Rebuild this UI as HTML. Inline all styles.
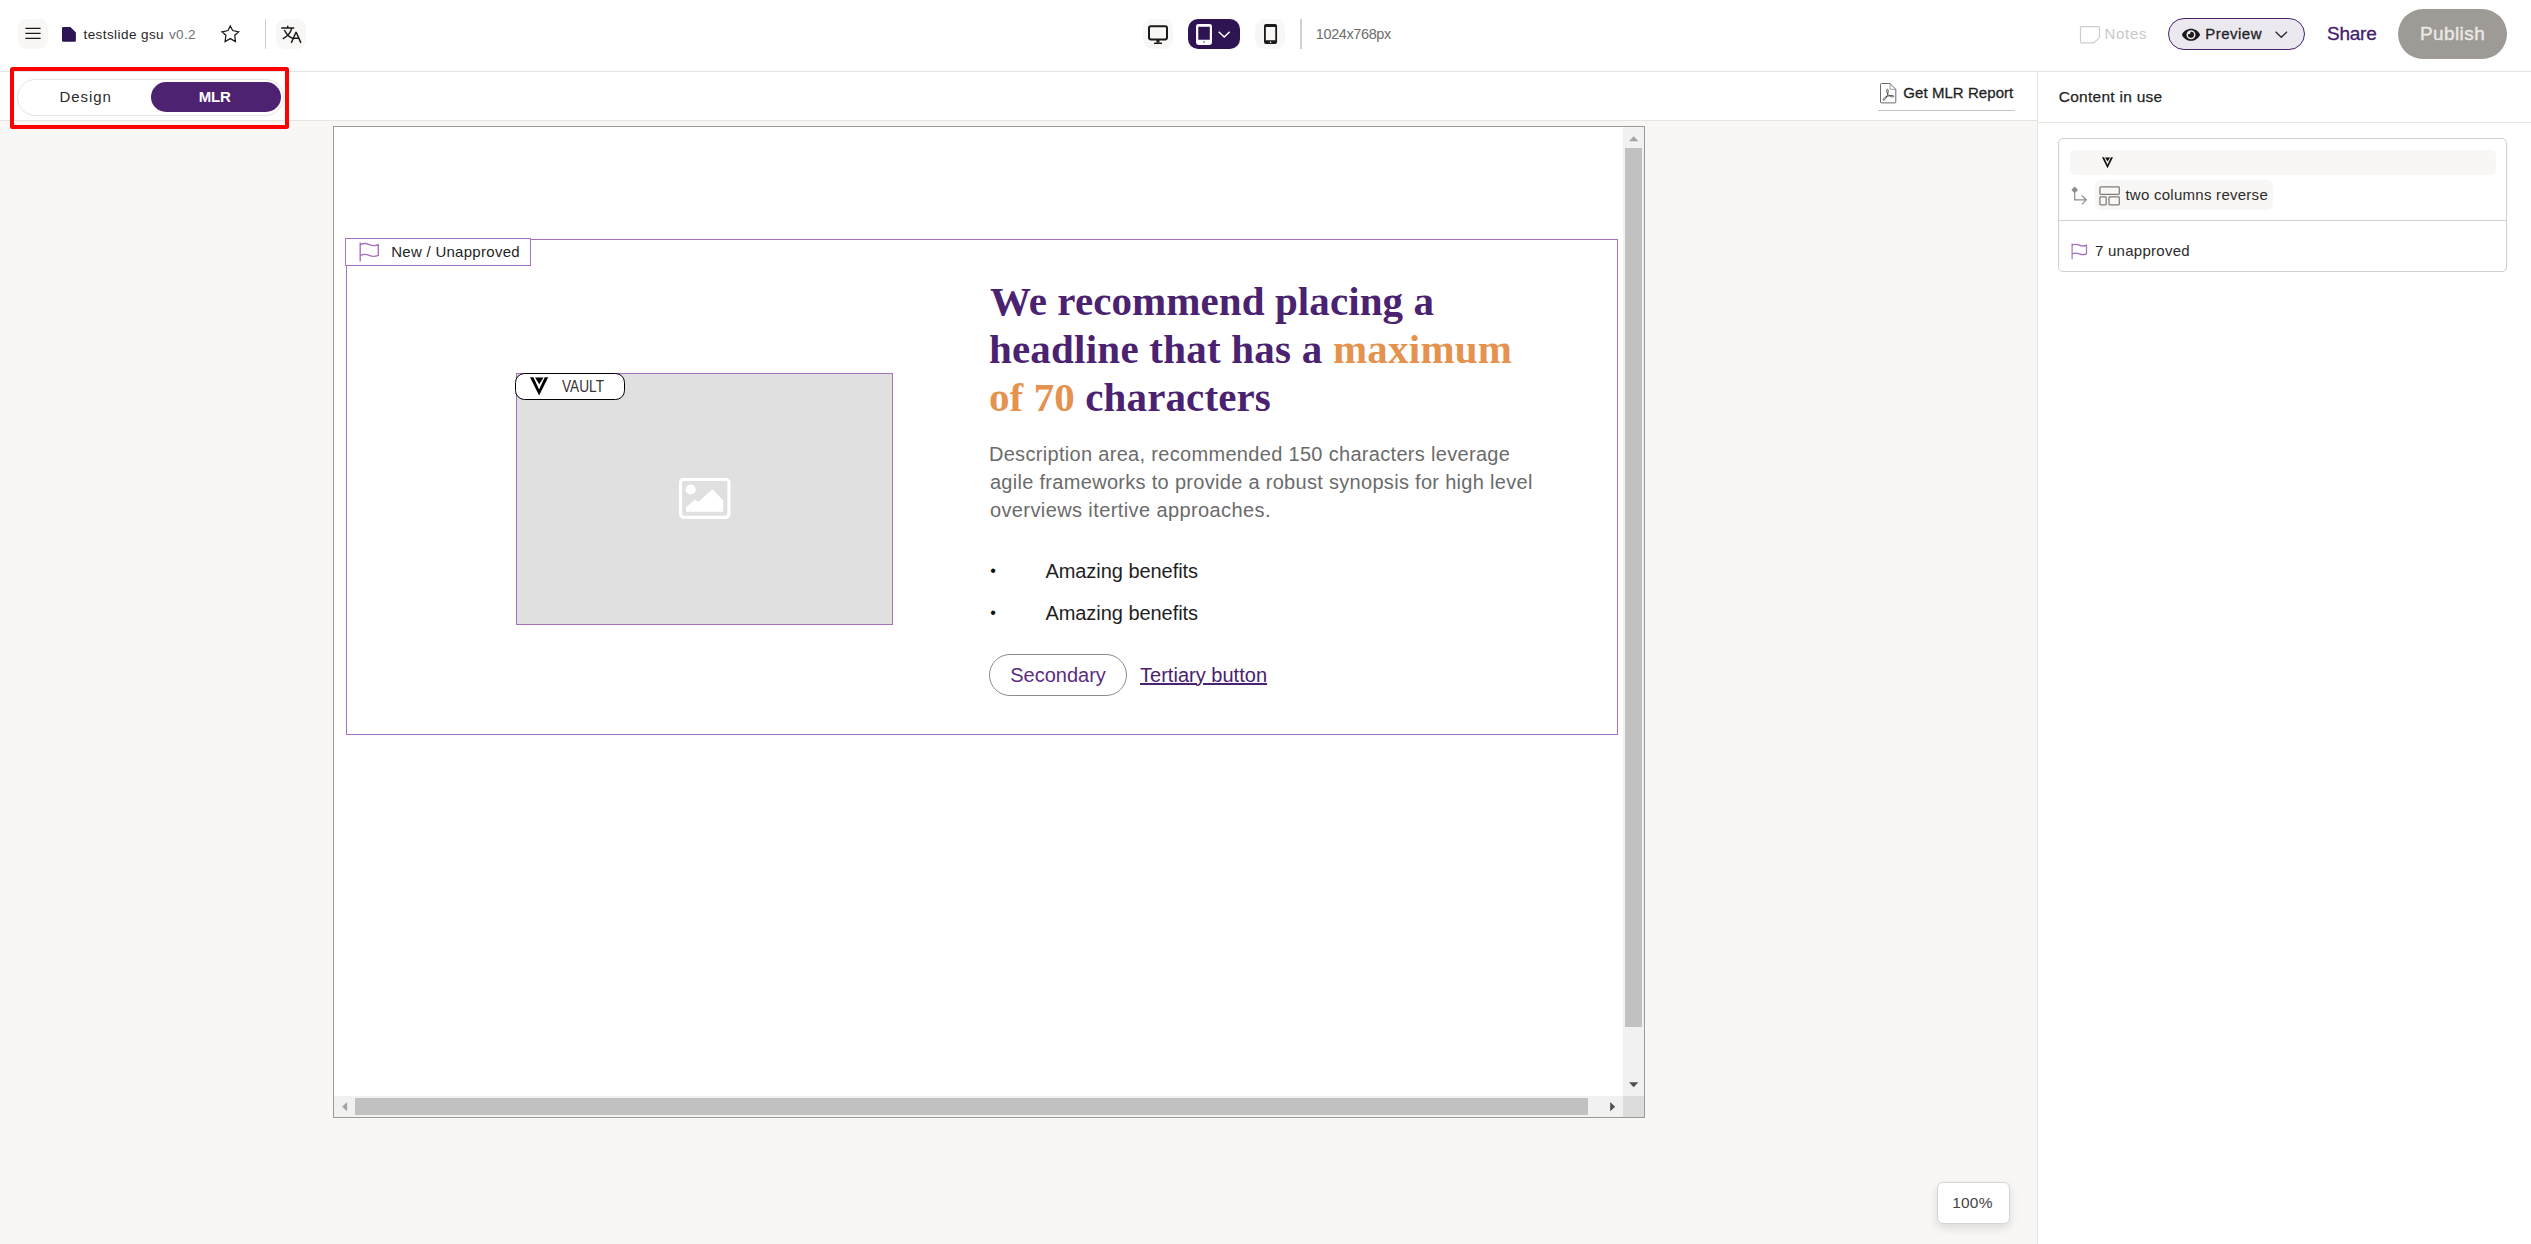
<!DOCTYPE html>
<html lang="en">
<head>
<meta charset="utf-8">
<title>testslide gsu v0.2</title>
<style>
*{box-sizing:border-box;margin:0;padding:0}
html,body{width:2531px;height:1244px;overflow:hidden;background:#f8f7f5;font-family:"Liberation Sans",sans-serif;color:#2b2b2b}
.abs,.t{position:absolute}
.t{white-space:nowrap;line-height:1;display:block}
#topbar{left:0;top:0;width:2531px;height:72px;background:#fff;border-bottom:1px solid #e6e4e1}
#subbar{left:0;top:72px;width:2038px;height:49px;background:#fff;border-bottom:1px solid #e6e4e1}
#rpanel{left:2037px;top:72px;width:494px;height:1172px;background:#fff;border-left:1px solid #e6e4e1}
#rhead{left:2038px;top:72px;width:493px;height:51px;border-bottom:1px solid #e6e4e1}
.hl{font-family:"Liberation Serif",serif;font-weight:bold}
.ibtn{background:#f8f7f5;border-radius:9px;width:30px;height:30px;top:19px}
svg{position:absolute;overflow:visible}
</style>
</head>
<body>
<!-- ===== TOP BAR ===== -->
<div id="topbar" class="abs"></div>
<!-- hamburger -->
<div class="abs ibtn" style="left:18px"></div>
<svg style="left:25px;top:27px" width="16" height="14" viewBox="0 0 16 14"><path d="M0.4 1.4H15.6M0.4 6.4H15.6M0.4 11.45H15.6" stroke="#1a1a1a" stroke-width="1.2" fill="none"/></svg>
<!-- file icon -->
<svg style="left:62px;top:27px" width="14" height="15" viewBox="0 0 14 15"><path d="M1.2 0H8.4L13.900 5.600V13.600a1.200 1.200 0 0 1-1.200 1.200H1.200A1.200 1.200 0 0 1 0 13.600V1.200A1.200 1.200 0 0 1 1.200 0Z" fill="#2e1452"/></svg>
<span class="t" id="t_title" style="left:83.50px;top:28.00px;letter-spacing:0.422px;font-size:13.5px;color:#1f1f1f">testslide gsu</span>
<span class="t" id="t_ver" style="left:169.00px;top:28.00px;letter-spacing:0.330px;font-size:13.5px;color:#6f6f6f">v0.2</span>
<!-- star -->
<svg style="left:219px;top:23px" width="23" height="23" viewBox="0 0 23 23"><path d="M11.30 3.00 L13.62 7.50 L19.71 8.84 L15.76 12.34 L16.43 18.49 L11.30 15.59 L6.08 18.49 L6.93 12.34 L2.98 8.84 L9.07 7.50Z" fill="none" stroke="#1a1a1a" stroke-width="1.25" stroke-linejoin="miter"/></svg>
<div class="abs" style="left:265px;top:19px;width:1px;height:30px;background:#cfcfcf"></div>
<!-- translate -->
<div class="abs ibtn" style="left:276px"></div>
<svg style="left:276px;top:19px" width="30" height="30" viewBox="0 0 30 30"><g fill="none" stroke="#1a1a1a" stroke-width="1.45" stroke-linecap="butt"><path d="M5.2 8.9H18.2M11.7 6.7V8.6M15.7 9.4C14.6 14 11.2 17.500 6.800 19.900M8.400 11C10 14.500 13 17.800 16.200 19.200H23.300"/><path d="M15.300 23.900 20.100 13 24.900 23.900" stroke-linejoin="bevel"/></g></svg>

<!-- device buttons -->
<div class="abs ibtn" style="left:1143px"></div>
<svg style="left:1148px;top:25px" width="20" height="20" viewBox="0 0 20 20"><rect x="1" y="1.2" width="18" height="13.2" rx="1.8" fill="none" stroke="#1a1a1a" stroke-width="2"/><rect x="8.5" y="15" width="3" height="2.6" fill="#1a1a1a"/><rect x="6" y="17.4" width="8" height="1.7" rx=".5" fill="#1a1a1a"/></svg>
<div class="abs" style="left:1188px;top:19px;width:52px;height:30px;border-radius:10px;background:#2e1452"></div>
<svg style="left:1196px;top:24px" width="16" height="21" viewBox="0 0 16 21"><path fill="#fff" fill-rule="evenodd" d="M2.4 0h11.2A2.4 2.4 0 0 1 16 2.4v16.2a2.4 2.4 0 0 1-2.4 2.4H2.4A2.4 2.4 0 0 1 0 18.6V2.4A2.4 2.4 0 0 1 2.4 0ZM2.3 2.8V15.8H13.8V2.8ZM7 18.1a1 .5 0 1 0 2 0a1 .5 0 1 0-2 0Z"/></svg>
<svg style="left:1217.6px;top:31px" width="12.4" height="7.6" viewBox="0 0 13 8"><path d="M.7.8l5.8 5.6L12.3.8" fill="none" stroke="#fff" stroke-width="1.5"/></svg>
<div class="abs ibtn" style="left:1255px"></div>
<svg style="left:1263.8px;top:24px" width="13.1" height="20.1" viewBox="0 0 13 20"><path fill="#1a1a1a" fill-rule="evenodd" d="M2 0h9a2 2 0 0 1 2 2v16a2 2 0 0 1-2 2H2a2 2 0 0 1-2-2V2A2 2 0 0 1 2 0ZM1.8 3V16.2H11.2V3ZM5.7 18.2a.8.8 0 1 0 1.6 0a.8.8 0 1 0-1.6 0Z"/></svg>
<div class="abs" style="left:1300px;top:19px;width:2px;height:30px;background:#d0d0d0"></div>
<span class="t" id="t_size" style="left:1315.80px;top:27.00px;letter-spacing:-0.396px;font-size:14.5px;color:#6e6e6e">1024x768px</span>

<!-- notes -->
<svg style="left:2080px;top:25.5px" width="20" height="18" viewBox="0 0 20 18"><path d="M1.5.6H18.5a1 1 0 0 1 1 1V11.6L13.8 16.9H1.5a1 1 0 0 1-1-1V1.6a1 1 0 0 1 1-1Z" fill="none" stroke="#cdcdcd" stroke-width="1.2"/></svg>
<span class="t" id="t_notes" style="left:2104.60px;top:25.60px;letter-spacing:0.654px;font-size:15px;color:#c9c9c9">Notes</span>
<!-- preview -->
<div class="abs" style="left:2168px;top:18px;width:137px;height:32px;border-radius:16px;background:#ebe8f0;border:1.3px solid #4a2270"></div>
<svg style="left:2181.5px;top:27.5px" width="18" height="13.5" viewBox="0 0 576 432"><path fill="#1a1a1a" d="M572.52 201.4C518.29 95.5 410.93 24 288 24S57.68 95.6 3.48 201.4a32.35 32.35 0 0 0 0 29.19C57.71 336.5 165.07 408 288 408s230.32-71.6 284.52-177.4a32.35 32.35 0 0 0 0-29.2zM288 360a144 144 0 1 1 144-144 143.93 143.93 0 0 1-144 144zm0-240a95.31 95.31 0 0 0-25.31 3.79 47.85 47.85 0 0 1-66.9 66.9A95.78 95.78 0 1 0 288 120z"/></svg>
<span class="t" id="t_preview" style="left:2205.30px;top:25.60px;letter-spacing:0.480px;font-size:15px;color:#1f1f1f;-webkit-text-stroke:.3px #1f1f1f">Preview</span>
<svg style="left:2275px;top:31px" width="13" height="8" viewBox="0 0 13 8"><path d="M.6.7l5.7 5.6L12 .7" fill="none" stroke="#2b2b2b" stroke-width="1.3"/></svg>
<span class="t" id="t_share" style="left:2327.00px;top:24.20px;letter-spacing:-0.233px;font-size:19px;color:#43206b;-webkit-text-stroke:.3px #43206b">Share</span>
<div class="abs" style="left:2398px;top:9px;width:109px;height:50px;border-radius:25px;background:#9e9b96"></div>
<span class="t" id="t_publish" style="left:2419.90px;top:24.20px;letter-spacing:0.425px;font-size:19px;color:#ebe8e5;-webkit-text-stroke:.4px #ebe8e5">Publish</span>


<!-- ===== SUB BAR ===== -->
<div id="subbar" class="abs"></div>
<!-- red highlight box -->
<div class="abs" style="left:9.6px;top:67px;width:279.8px;height:61.6px;border:4.4px solid #ff0000;border-radius:2.5px"></div>
<!-- toggle -->
<div class="abs" style="left:17px;top:79px;width:266.5px;height:37px;border-radius:18.5px;border:1px solid #e3e3e3;background:#fff"></div>
<div class="abs" style="left:151px;top:82px;width:130px;height:30px;border-radius:15px;background:#4d2270"></div>
<span class="t" id="t_design" style="left:59.50px;top:88.70px;letter-spacing:0.930px;font-size:15px;color:#2b2b2b">Design</span>
<span class="t" id="t_mlr" style="left:198.70px;top:88.70px;letter-spacing:-0.129px;font-size:15px;color:#fff;font-weight:bold">MLR</span>
<!-- get mlr report -->
<svg style="left:1880px;top:82.8px" width="17" height="21" viewBox="0 0 17 21"><path d="M1.4.5H10.100L15.800 6.300V19a.9.9 0 0 1-.9.9H1.400a.9.9 0 0 1-.9-.9V1.400a.9.9 0 0 1 .9-.9Z" fill="#fff" stroke="#5a5a5a" stroke-width=".9"/><path d="M10.100.7V6.300H15.700" fill="none" stroke="#8a8a8a" stroke-width=".85"/><path d="M7.500 6.300c-.9 0-1.100 1.200-.7 2.600.5 2 1.800 3.600 3.400 4.400 1.300.6 3 .8 3.500.2.400-.6-.5-1.100-1.800-1.100-2.600 0-5.800 1-7.400 2.400-.9.800-1.600 1.900-1.200 2.300.5.400 1.500-.3 2.300-1.500 1.300-1.900 2.300-4.700 2.600-6.900.1-1.300-.1-2.400-.7-2.400Z" fill="none" stroke="#444" stroke-width=".9"/></svg>
<span class="t" id="t_getmlr" style="left:1903.30px;top:84.70px;letter-spacing:0.059px;font-size:15px;color:#1f1f1f;-webkit-text-stroke:.3px #1f1f1f">Get MLR Report</span>
<div class="abs" style="left:1878px;top:110px;width:137px;height:1px;background:#c4c4c4"></div>


<!-- ===== RIGHT PANEL ===== -->
<div id="rpanel" class="abs"></div>
<div id="rhead" class="abs"></div>
<span class="t" id="t_ciu" style="left:2058.70px;top:89.00px;letter-spacing:0.274px;font-size:15.5px;color:#1f1f1f;-webkit-text-stroke:.25px #1f1f1f">Content in use</span>
<div class="abs" style="left:2058px;top:138px;width:449px;height:134px;border:1px solid #d2d0cd;border-radius:5px;background:#fff"></div>
<div class="abs" style="left:2070px;top:150px;width:426px;height:25px;border-radius:5px;background:#f8f7f5"></div>
<!-- vault V small -->
<svg style="left:2101.5px;top:156.5px" width="11" height="11.5" viewBox="0 0 18.2 18.4"><path d="M0 .2H3.400L9.1 12.600 14.800.2H18.200L9.1 18.400Z" fill="#111"/><path d="M5 .6H13.500L9.200 7.200Z" fill="#111"/></svg>
<!-- arrow icon -->
<svg style="left:2070px;top:186px" width="18" height="19" viewBox="0 0 18 19"><path d="M4.700.600 8 3.900 4.700 7.200 1.400 3.900Z" fill="#8f8b85"/><path d="M4.700 6.500V13.800H16M11.800 9.300 16.300 13.800 11.800 18.300" fill="none" stroke="#8f8b85" stroke-width="1.2"/></svg>
<div class="abs" style="left:2095px;top:180px;width:178px;height:30px;border-radius:6px;background:#f8f7f5"></div>
<!-- layout icon -->
<svg style="left:2099px;top:185.500px" width="22" height="20" viewBox="0 0 22 20"><g fill="none" stroke="#7f7b75" stroke-width="1.25"><rect x=".9" y=".9" width="19.400" height="7.400" rx=".8"/><rect x=".9" y="10.900" width="6.300" height="8" rx=".8"/><rect x="10" y="10.900" width="10.300" height="8" rx=".8"/></g></svg>
<span class="t" id="t_twocol" style="left:2125.40px;top:186.70px;letter-spacing:0.266px;font-size:15px;color:#2b2b2b">two columns reverse</span>
<div class="abs" style="left:2059px;top:220px;width:447px;height:1px;background:#d2d0cd"></div>
<!-- flag -->
<svg style="left:2071px;top:243px" width="17" height="17" viewBox="0 0 17 17"><path d="M1.100.600V16.200M1.100 2.300C3.800.800 5.800 1 8.300 2.100 10.800 3.200 13 3.200 15.500 2.100V10.900C13 12 10.800 12 8.300 10.900 5.800 9.800 3.800 9.600 1.100 11.100" fill="none" stroke="#a66dbd" stroke-width="1.15" stroke-linejoin="round"/></svg>
<span class="t" id="t_unappr" style="left:2094.90px;top:242.70px;letter-spacing:0.273px;font-size:15px;color:#2b2b2b">7 unapproved</span>


<!-- ===== CANVAS FRAME ===== -->
<div class="abs" id="frame" style="left:333px;top:126px;width:1312px;height:992px;border:1px solid #9d9a94;background:#fff"></div>
<!-- scrollbars -->
<div class="abs" style="left:1623px;top:127px;width:21px;height:969px;background:#f1f1f1"></div>
<div class="abs" style="left:334px;top:1096px;width:1289px;height:21px;background:#f1f1f1"></div>
<div class="abs" style="left:1623px;top:1096px;width:21px;height:21px;background:#dcdcdc"></div>
<div class="abs" style="left:1625px;top:148px;width:17px;height:879px;background:#c1c1c1"></div>
<div class="abs" style="left:355px;top:1098px;width:1233px;height:17px;background:#c1c1c1"></div>
<svg style="left:1628.500px;top:135.500px" width="9.4" height="5.6" viewBox="0 0 10 6"><path d="M0 5.500 5 .2 10 5.500Z" fill="#a3a3a3"/></svg>
<svg style="left:1628.500px;top:1082px" width="9.4" height="5.6" viewBox="0 0 10 6"><path d="M0 .2 5 5.500 10 .2Z" fill="#505050"/></svg>
<svg style="left:341.800px;top:1101.500px" width="5.6" height="9.4" viewBox="0 0 6 10"><path d="M5.500 0 .2 5 5.500 10Z" fill="#a3a3a3"/></svg>
<svg style="left:1609.800px;top:1101.500px" width="5.6" height="9.4" viewBox="0 0 6 10"><path d="M.2 0 5.500 5 .2 10Z" fill="#505050"/></svg>

<!-- block outline -->
<div class="abs" style="left:346px;top:239px;width:1272px;height:496px;border:1px solid #a870bf"></div>
<div class="abs" style="left:345px;top:238px;width:186px;height:28px;border:1px solid #a870bf;background:#fff"></div>
<svg style="left:358.500px;top:242px" width="21" height="20" viewBox="0 0 21 20"><path d="M1.200.600V19.400M1.200 2.800C4.600.900 7.200 1.200 10.300 2.600 13.400 4 16 4 19.300 2.600V13.400C16 14.800 13.400 14.800 10.300 13.400 7.200 12 4.600 11.700 1.200 13.600" fill="none" stroke="#a870bf" stroke-width="1.400" stroke-linejoin="round"/></svg>
<span class="t" id="t_newun" style="left:391.20px;top:243.80px;letter-spacing:0.281px;font-size:15px;color:#1f1f1f">New / Unapproved</span>

<!-- image placeholder -->
<div class="abs" style="left:516px;top:373px;width:377px;height:252px;border:1px solid #a870bf;background:#e0e0e0"></div>
<svg style="left:678.5px;top:478.1px" width="51.500" height="41" viewBox="0 0 51.500 41"><rect x="1.550" y="1.550" width="48.400" height="37.800" rx="3" fill="none" stroke="#fff" stroke-width="3.100"/><circle cx="11.700" cy="11.500" r="5.100" fill="#fff"/><path d="M7 29.300 16 21.400 19.400 23.900 33.200 11.300 44.200 22.200V33.800H7Z" fill="#fff"/></svg>
<div class="abs" style="left:515px;top:373px;width:110px;height:27px;border:1.1px solid #000;border-radius:9.5px;background:#fff"></div>
<svg style="left:529.900px;top:376.500px" width="18.200" height="18.400" viewBox="0 0 18.200 18.400"><path d="M0 .2H3.400L9.100 12.600 14.800.2H18.200L9.100 18.400Z" fill="#000"/><path d="M5 .6H13.500L9.200 7.200Z" fill="#000"/></svg>
<span class="t" id="t_vault" style="left:562.00px;top:378.00px;transform:scaleX(0.8292);font-size:16.5px;color:#333;transform-origin:0 0">VAULT</span>

<!-- headline -->
<span class="t hl" id="t_h1" style="left:989.90px;top:280.50px;letter-spacing:0.089px;font-size:41px;color:#4a2270">We recommend placing a</span>
<span class="t hl" id="t_h2" style="left:988.90px;top:328.90px;letter-spacing:0.229px;font-size:41px;color:#4a2270">headline that has a <span style="color:#e5924f">maximum</span></span>
<span class="t hl" id="t_h3" style="left:988.90px;top:376.70px;letter-spacing:0.120px;font-size:41px;color:#4a2270"><span style="color:#e5924f">of 70</span> characters</span>
<!-- description -->
<span class="t" id="t_d1" style="left:988.90px;top:444.00px;letter-spacing:0.314px;font-size:20px;color:#6b6b6b">Description area, recommended 150 characters leverage</span>
<span class="t" id="t_d2" style="left:989.90px;top:472.00px;letter-spacing:0.302px;font-size:20px;color:#6b6b6b">agile frameworks to provide a robust synopsis for high level</span>
<span class="t" id="t_d3" style="left:989.90px;top:499.70px;letter-spacing:0.398px;font-size:20px;color:#6b6b6b">overviews itertive approaches.</span>
<!-- bullets -->
<span class="t" id="t_b1d" style="left:990.30px;top:562.00px;font-size:16.2px;color:#111">•</span>
<span class="t" id="t_b1" style="left:1045.40px;top:561.00px;letter-spacing:-0.048px;font-size:20px;color:#1f1f1f">Amazing benefits</span>
<span class="t" id="t_b2d" style="left:990.30px;top:604.00px;font-size:16.2px;color:#111">•</span>
<span class="t" id="t_b2" style="left:1045.40px;top:603.00px;letter-spacing:-0.048px;font-size:20px;color:#1f1f1f">Amazing benefits</span>
<!-- buttons -->
<div class="abs" style="left:989px;top:654px;width:138px;height:42px;border:1px solid #8f8c85;border-radius:21px;background:#fff"></div>
<span class="t" id="t_sec" style="left:1010.30px;top:664.80px;letter-spacing:-0.014px;font-size:20px;color:#5b2d82">Secondary</span>
<span class="t" id="t_ter" style="left:1140.00px;top:664.80px;letter-spacing:0.021px;font-size:20px;color:#4a2270;text-decoration:underline">Tertiary button</span>


<!-- ===== ZOOM BADGE ===== -->
<div class="abs" style="left:1937px;top:1182px;width:73px;height:42px;border:1px solid #d4d4d4;border-radius:6px;background:#fff;box-shadow:0 4px 10px rgba(0,0,0,.12)"></div>
<span class="t" id="t_zoom" style="left:1952.20px;top:1195.30px;letter-spacing:0.213px;font-size:15.500px;color:#444">100%</span>

</body>
</html>
